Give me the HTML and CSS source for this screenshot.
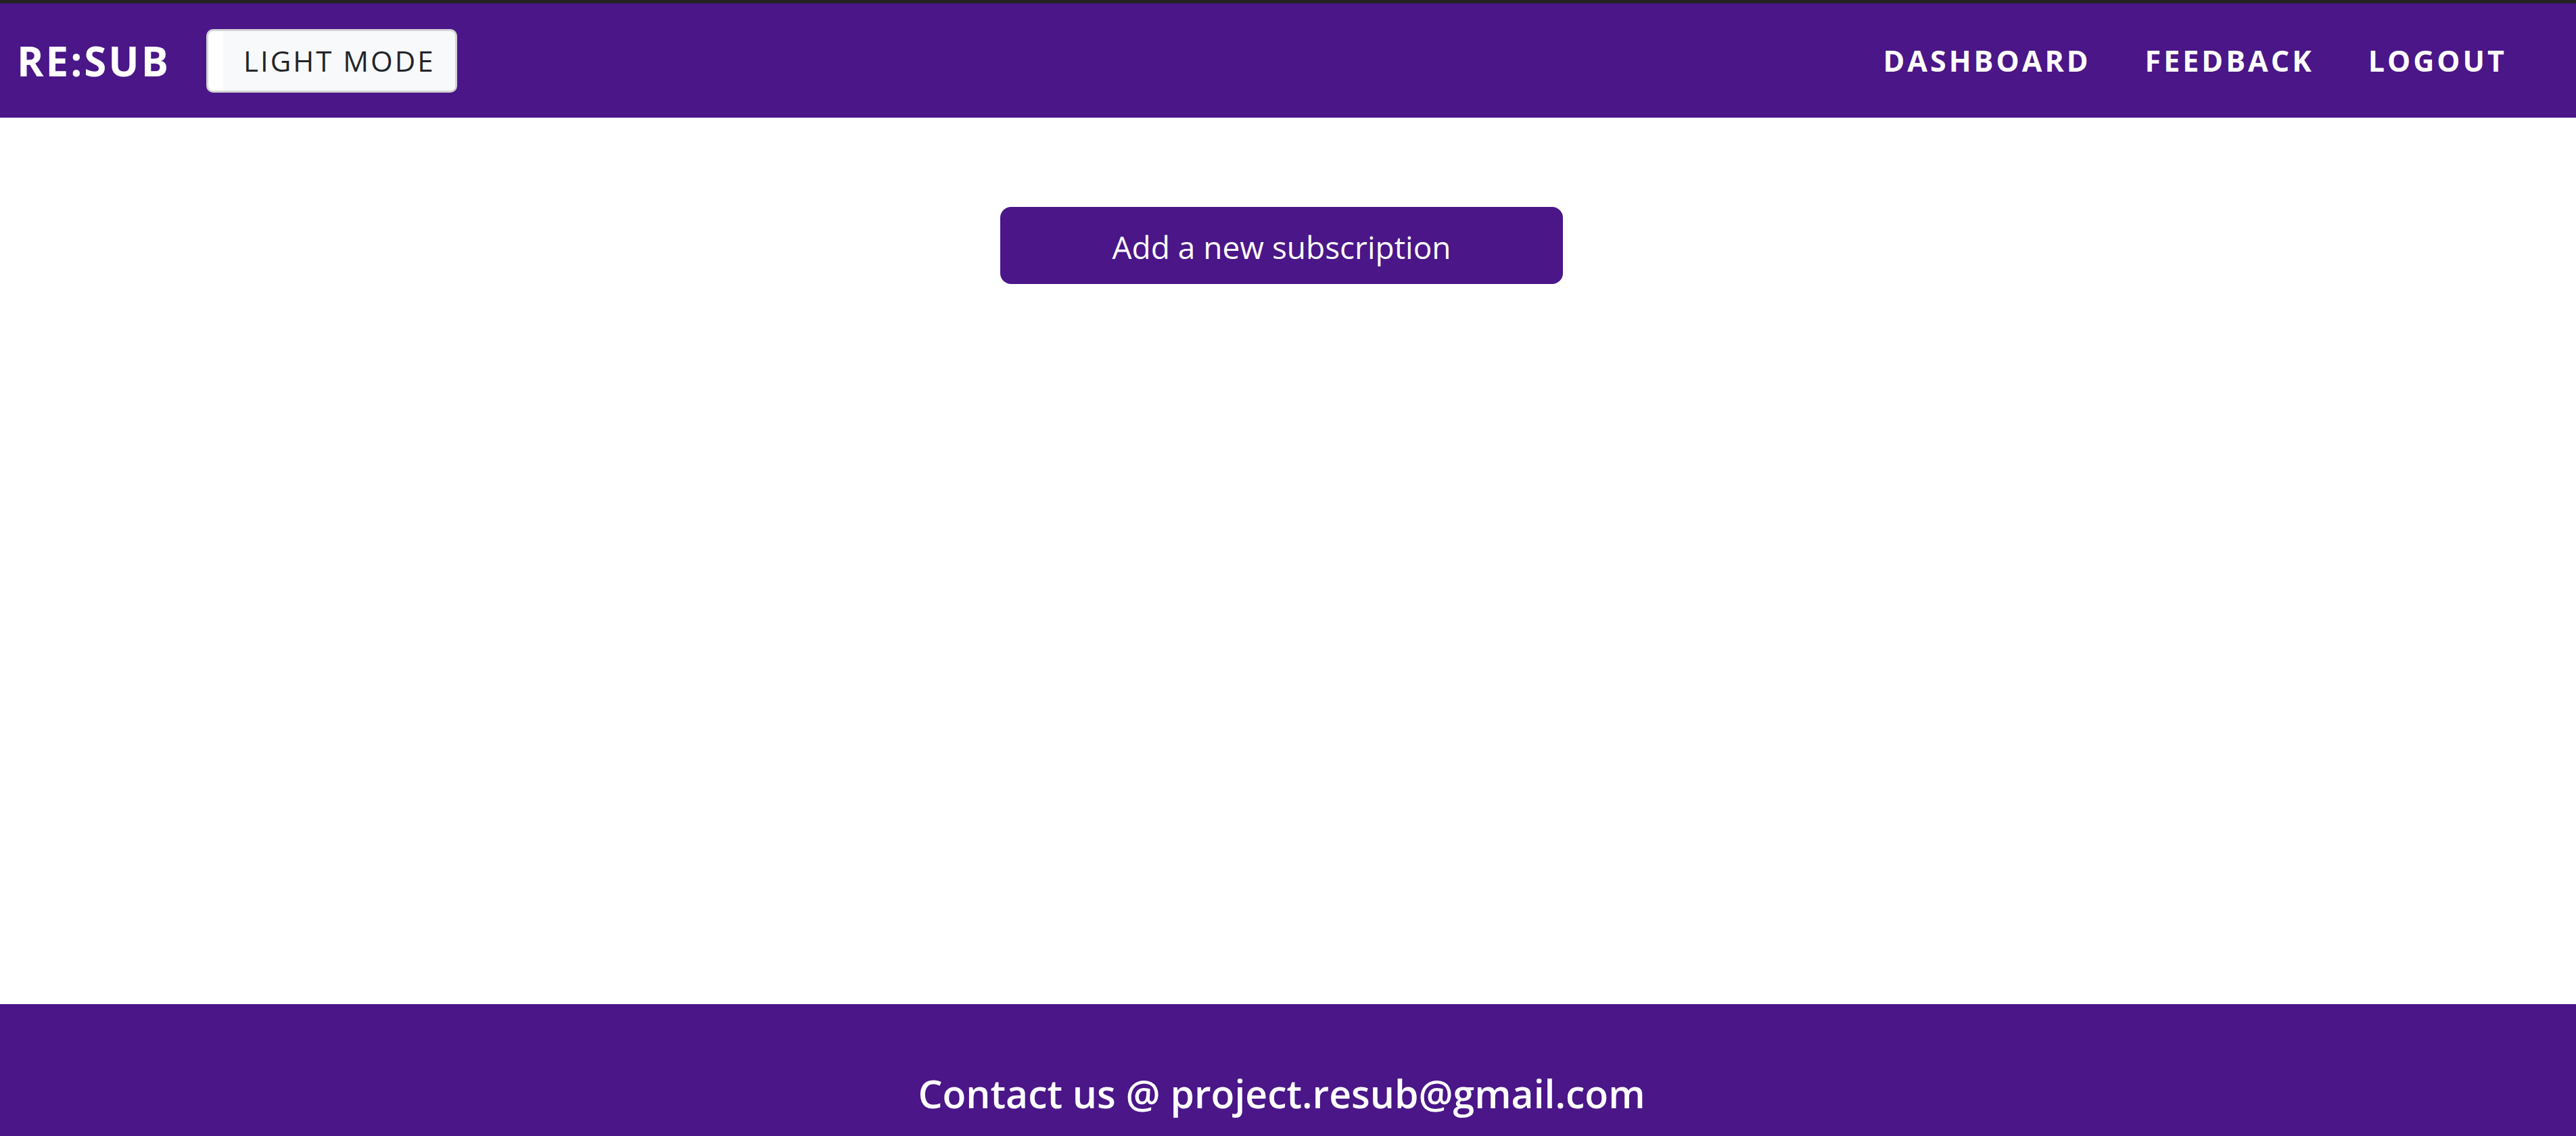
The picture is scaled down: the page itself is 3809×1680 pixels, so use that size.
FILE: index.html
```html
<!DOCTYPE html>
<html lang="en">
<head>
<meta charset="utf-8">
<title>RE:SUB</title>
<link rel="stylesheet" href="styles.css">
</head>
<body>
<div class="topline"></div>
<nav class="navbar">
  <a class="brand" href="#">RE:SUB</a>
  <button class="mode-btn" type="button">LIGHT MODE</button>
  <ul class="nav-links">
    <li><a href="#">DASHBOARD</a></li>
    <li><a href="#">FEEDBACK</a></li>
    <li><a href="#">LOGOUT</a></li>
  </ul>
</nav>
<main class="content">
  <button class="add-btn" type="button">Add a new subscription</button>
</main>
<footer class="footer">
  <p class="contact">Contact us @ project.resub@gmail.com</p>
</footer>
</body>
</html>
```
FILE: styles.css
```css
* { box-sizing: border-box; }
html, body { margin: 0; padding: 0; }
body {
  font-family: "Open Sans", "Noto Sans", sans-serif;
  background: #ffffff;
  color: #212529;
  overflow: hidden;
}
.topline {
  height: 5px;
  background: #232323;
}
.navbar {
  height: 169px;
  background: #4a1688;
  display: flex;
  align-items: center;
  padding: 0 102px 0 25px;
}
.brand {
  color: #ffffff;
  text-decoration: none;
  font-weight: 700;
  font-size: 60px;
  letter-spacing: 3px;
  line-height: 1;
}
.mode-btn {
  margin-left: 53px;
  width: 371px;
  height: 94px;
  padding: 0 32px 0 52px;
  border: 3px solid #d3d4d6;
  border-radius: 10px;
  background: linear-gradient(to right, #ffffff 0, #ffffff 22px, #f8f9fa 22px);
  color: #212529;
  font-family: "Open Sans", "Noto Sans", sans-serif;
  font-size: 42px;
  font-weight: 400;
  letter-spacing: 3px;
  line-height: 1;
  text-align: left;
  white-space: nowrap;
}
.nav-links {
  list-style: none;
  margin: 0 0 0 auto;
  padding: 0;
  display: flex;
  gap: 80px;
}
.nav-links a {
  color: #ffffff;
  text-decoration: none;
  font-weight: 700;
  font-size: 43px;
  letter-spacing: 4px;
  line-height: 1;
}
.content {
  height: 1311px;
  display: flex;
  justify-content: center;
  align-items: flex-start;
  padding: 132px 19px 0 0;
}
.add-btn {
  width: 832px;
  height: 114px;
  border: none;
  border-radius: 16px;
  background: #4a1688;
  color: #ffffff;
  font-family: "Open Sans", "Noto Sans", sans-serif;
  font-size: 46px;
  font-weight: 400;
  line-height: 1;
  padding-top: 4px;
}
.footer {
  background: #4a1688;
  height: 300px;
  padding: 90px 19px 0 0;
  text-align: center;
}
.contact {
  margin: 0;
  color: #ffffff;
  font-size: 57px;
  font-weight: 600;
  line-height: 1.5;
}
```
